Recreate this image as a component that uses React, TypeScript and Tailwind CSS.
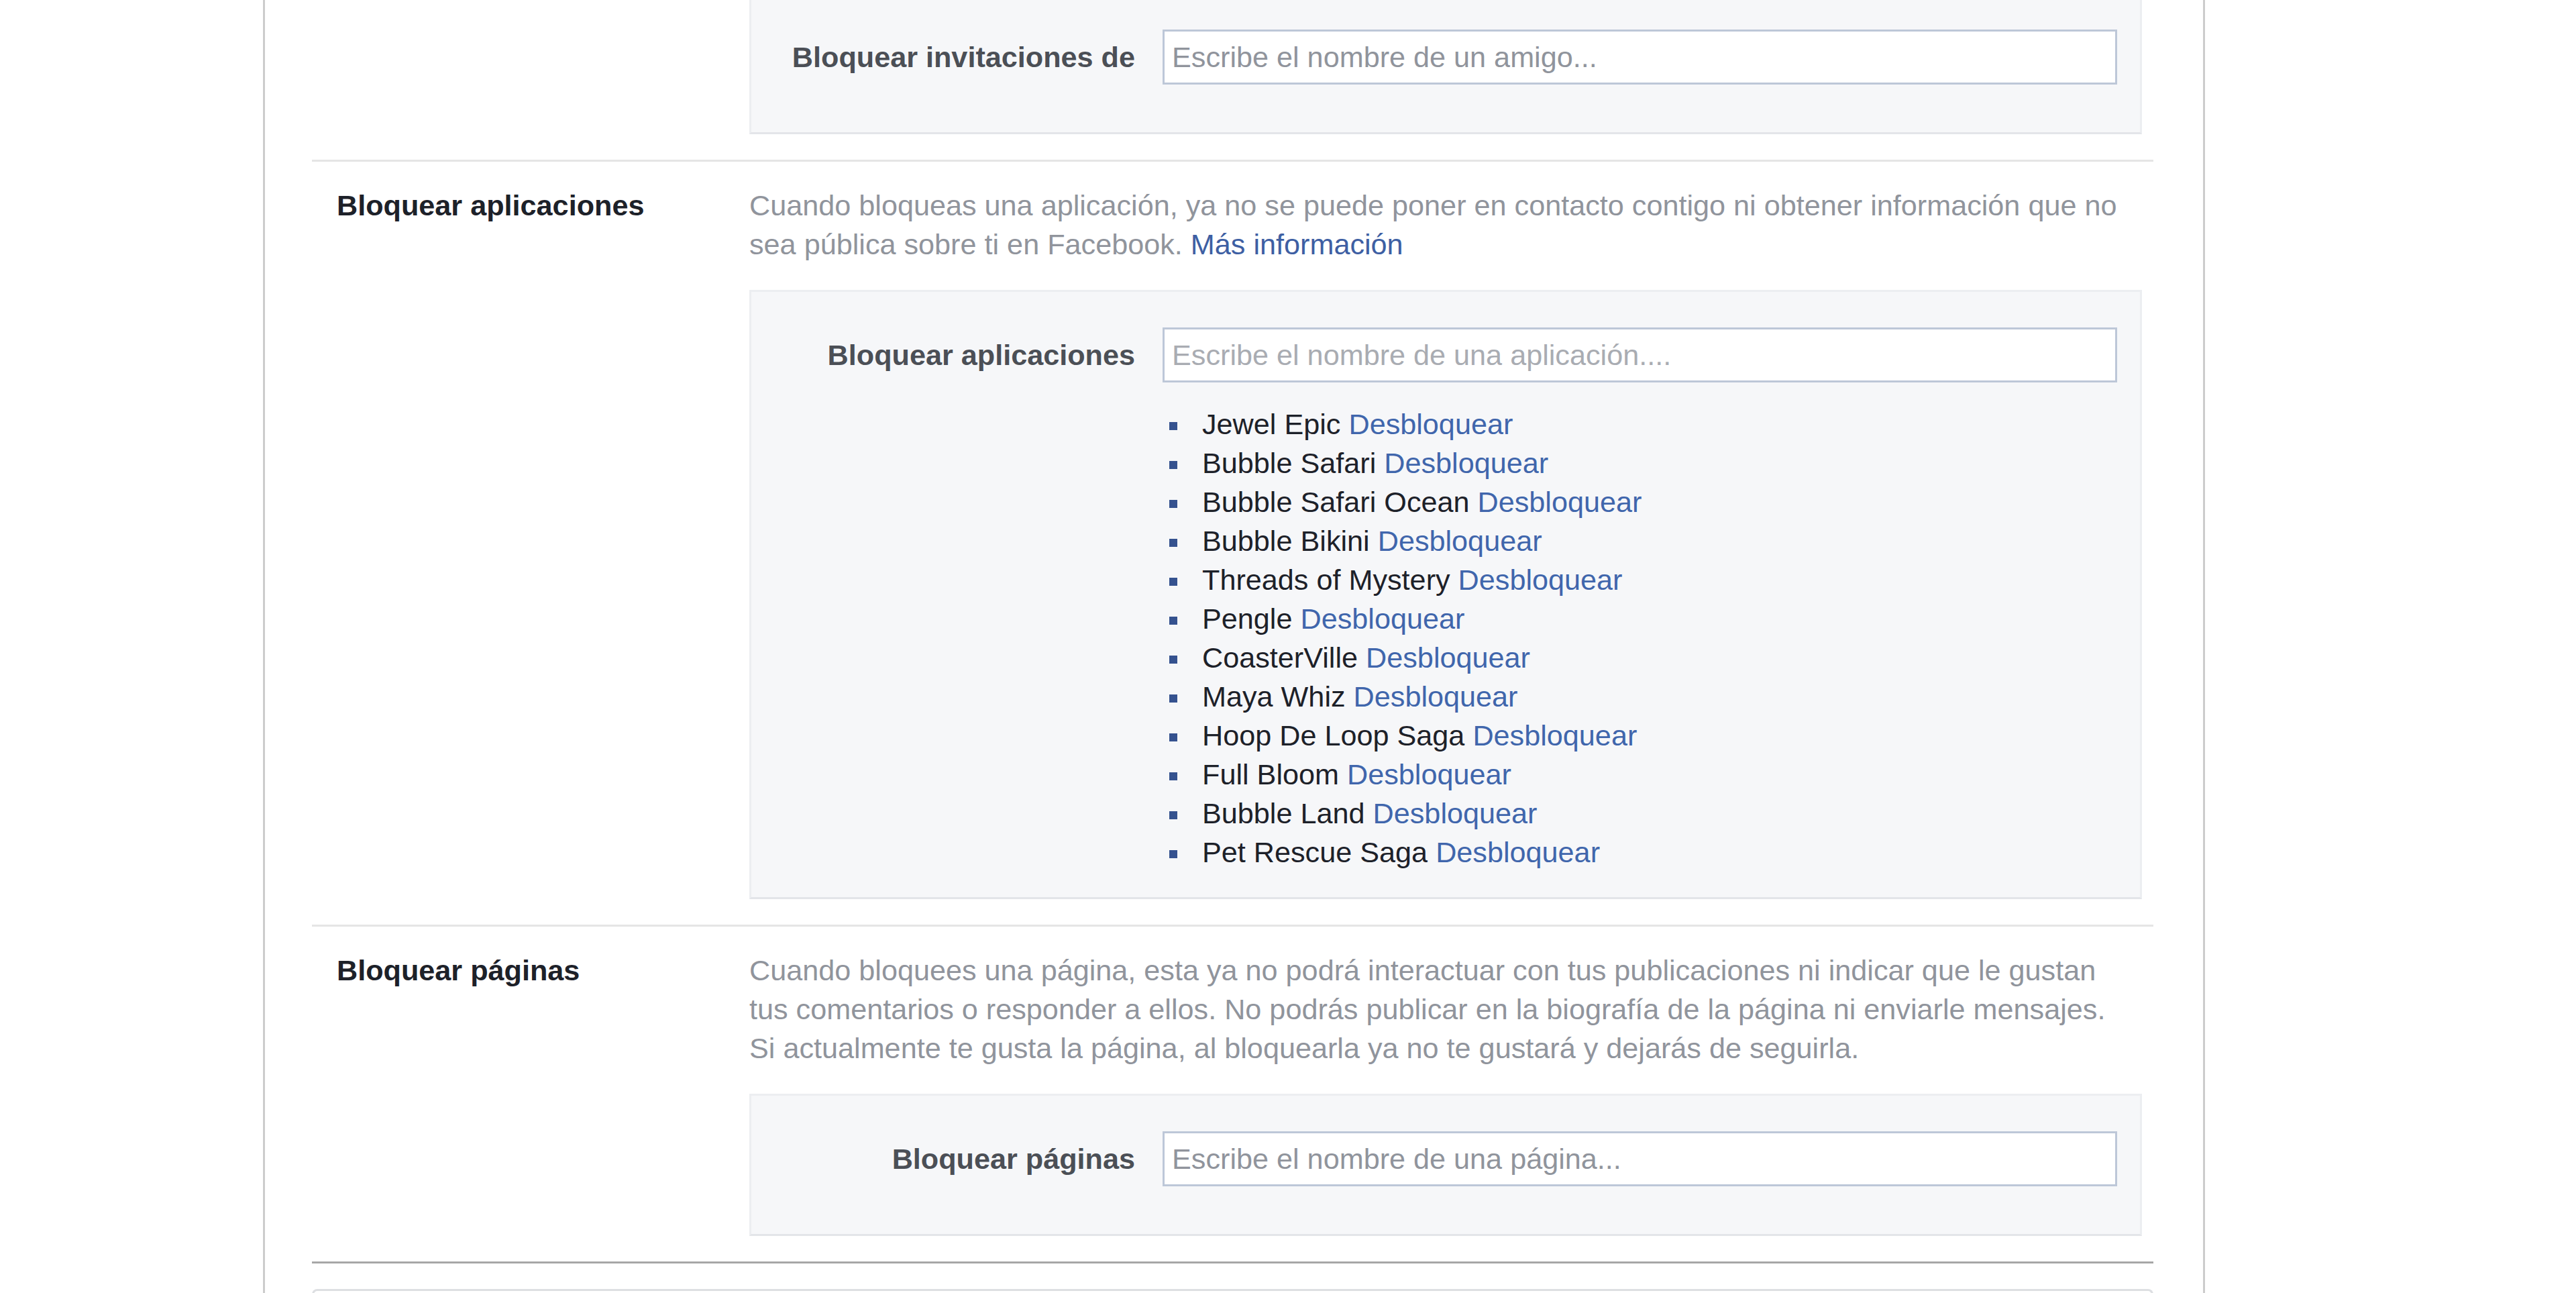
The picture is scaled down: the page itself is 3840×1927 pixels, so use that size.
import React from 'react';

const apps = [
  'Jewel Epic',
  'Bubble Safari',
  'Bubble Safari Ocean',
  'Bubble Bikini',
  'Threads of Mystery',
  'Pengle',
  'CoasterVille',
  'Maya Whiz',
  'Hoop De Loop Saga',
  'Full Bloom',
  'Bubble Land',
  'Pet Rescue Saga',
];

function BlockInput({
  label,
  placeholder,
  light = false,
}: {
  label: string;
  placeholder: string;
  light?: boolean;
}) {
  return (
    <div className="flex items-center">
      <div className="w-[572px] shrink-0 text-right font-bold text-[#4b4f56]">{label}</div>
      <input
        className={
          light
            ? 'ml-[41px] h-[82px] flex-1 border-[3px] border-[#bdc7d8] bg-white pl-[11px] text-[#1d2129] outline-none placeholder:text-[#a9acb2]'
            : 'ml-[41px] h-[82px] flex-1 border-[3px] border-[#bdc7d8] bg-white pl-[11px] text-[#1d2129] outline-none placeholder:text-[#90949c]'
        }
        placeholder={placeholder}
      />
    </div>
  );
}

function GrayBox({ children, top = true }: { children: React.ReactNode; top?: boolean }) {
  return (
    <div
      className={
        top
          ? 'border-[3px] border-[#eceef1] border-b-[#e3e5e9] bg-[#f6f7f9] pr-[34px] pt-[53px]'
          : 'border-x-[3px] border-b-[3px] border-[#eceef1] border-b-[#e3e5e9] bg-[#f6f7f9] pr-[34px] pt-[44px]'
      }
    >
      {children}
    </div>
  );
}

function Section({
  title,
  children,
  first = false,
}: {
  title?: string;
  children: React.ReactNode;
  first?: boolean;
}) {
  return (
    <div
      className={
        first
          ? 'flex pb-[38px] pl-[37px]'
          : 'flex border-t-[3px] border-[#e5e5e5] pb-[38px] pl-[37px] pt-[36px]'
      }
    >
      <div className="w-[615px] shrink-0 font-bold text-[#1d2129]">{title}</div>
      <div className="w-[2076px] shrink-0">{children}</div>
    </div>
  );
}

export default function App() {
  return (
    <div className="h-[1927px] w-full overflow-hidden bg-white font-['Liberation_Sans',Arial,sans-serif] text-[43.2px] leading-[58px]">
      <div className="ml-[392px] h-full w-[2895px] border-x-[3px] border-[#cccccc] pl-[70px] pr-[74px]">
        <Section first>
          <GrayBox top={false}>
            <div className="pb-[71px]">
              <BlockInput label="Bloquear invitaciones de" placeholder="Escribe el nombre de un amigo..." />
            </div>
          </GrayBox>
        </Section>

        <Section title="Bloquear aplicaciones">
          <p className="text-[#90949c]">
            Cuando bloqueas una aplicación, ya no se puede poner en contacto contigo ni obtener información que no
            <br />
            sea pública sobre ti en Facebook. <a className="text-[#3e5fa3]">Más información</a>
          </p>
          <div className="mt-[39px]">
            <GrayBox>
              <BlockInput
                label="Bloquear aplicaciones"
                placeholder="Escribe el nombre de una aplicación...."
                light
              />
              <ul className="ml-[613px] mt-[33px] pb-[38px] pl-[10px]">
                {apps.map((app) => (
                  <li key={app} className="flex items-start">
                    <span className="mt-[26px] h-[12px] w-[12px] shrink-0 bg-[#35528f]" />
                    <span className="ml-[37px] text-[#1d2129]">
                      {app} <a className="text-[#4066ac]">Desbloquear</a>
                    </span>
                  </li>
                ))}
              </ul>
            </GrayBox>
          </div>
        </Section>

        <Section title="Bloquear páginas">
          <p className="text-[#90949c]">
            Cuando bloquees una página, esta ya no podrá interactuar con tus publicaciones ni indicar que le gustan
            <br />
            tus comentarios o responder a ellos. No podrás publicar en la biografía de la página ni enviarle mensajes.
            <br />
            Si actualmente te gusta la página, al bloquearla ya no te gustará y dejarás de seguirla.
          </p>
          <div className="mt-[39px]">
            <GrayBox>
              <div className="pb-[71px]">
                <BlockInput label="Bloquear páginas" placeholder="Escribe el nombre de una página..." />
              </div>
            </GrayBox>
          </div>
        </Section>

        <div className="border-t-[3px] border-[#a7a7a7] pt-[38px]">
          <div className="h-[60px] rounded-t-[8px] border-x-[3px] border-t-[3px] border-[#dddfe2]" />
        </div>
      </div>
    </div>
  );
}
